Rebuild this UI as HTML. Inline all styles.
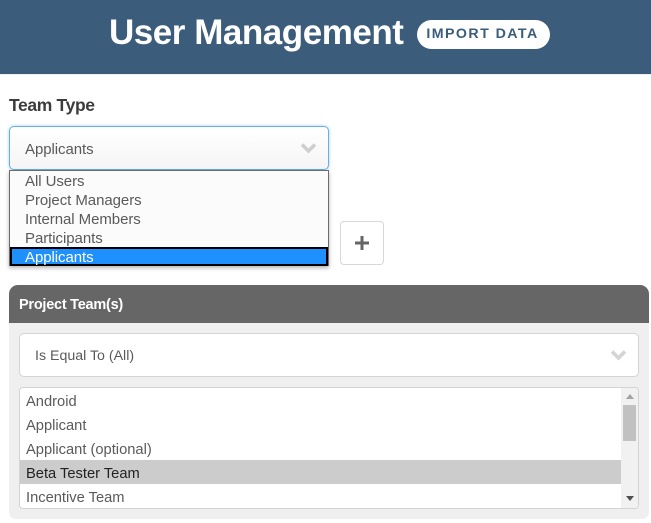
<!DOCTYPE html>
<html>
<head>
<meta charset="utf-8">
<style>
html,body{margin:0;padding:0;background:#fff}
body{width:651px;height:523px;position:relative;overflow:hidden;font-family:"Liberation Sans",sans-serif;color:#555}
div{position:absolute;box-sizing:border-box;white-space:nowrap}
svg{position:absolute;display:block}
.t{font-size:15px;letter-spacing:-0.06px;line-height:19px;left:25px;color:#5a5a5a}
.r{left:0;width:601px;height:24px;line-height:26px;padding-left:6px;font-size:14.7px;color:#5a5a5a}
</style>
</head>
<body>
<div style="left:0;top:0;width:651px;height:74px;background:#3b5d7b"></div>
<div style="left:0;top:74px;width:651px;height:1px;background:#eee"></div>
<div style="left:109px;top:12px;font-size:35px;line-height:42px;color:#fff;font-weight:700;letter-spacing:-0.47px">User Management</div>
<div style="left:417px;top:20px;width:133px;height:29px;padding-right:2px;background:#fff;border-radius:15px;color:#3b5d7b;font-weight:700;font-size:14.2px;line-height:29px;text-align:center;letter-spacing:1.45px">IMPORT DATA</div>

<div style="left:9px;top:95px;font-size:17.5px;line-height:21px;font-weight:700;color:#3c3c3c;letter-spacing:-0.35px">Team Type</div>

<div style="left:9px;top:126px;width:320px;height:44px;border:1px solid #66afe9;border-radius:5px;background:linear-gradient(#fff,#f5f5f5);box-shadow:0 0 3px rgba(102,175,233,.6)"></div>
<div class="t" style="top:140px">Applicants</div>
<svg style="left:300px;top:142px" width="17" height="13" viewBox="0 0 17 13"><path d="M2 2.5 L8.5 9 L15 2.5" fill="none" stroke="#cfcfcf" stroke-width="3.6"/></svg>

<div style="left:340px;top:221px;width:44px;height:44px;border:1px solid #d8d8d8;border-radius:4px;background:#fff"></div>
<svg style="left:355px;top:236px" width="14" height="14" viewBox="0 0 14 14"><path d="M0 5.5H14V8.5H0ZM5.5 0H8.5V14H5.5Z" fill="#666"/></svg>

<div style="left:9px;top:170px;width:320px;height:96px;background:#fbfbfb;border:1px solid #6b6b6b;box-shadow:0 2px 4px rgba(0,0,0,.3)"></div>
<div class="t" style="top:172px">All Users</div>
<div class="t" style="top:191px">Project Managers</div>
<div class="t" style="top:210px">Internal Members</div>
<div class="t" style="top:229px">Participants</div>
<div style="left:10px;top:247px;width:318px;height:19px;background:#1e90ff;border:2px solid #000"></div>
<div class="t" style="top:248px;color:#fff">Applicants</div>

<div style="left:9px;top:285px;width:640px;height:234px;background:#efefef;border-radius:9px 9px 7px 7px"></div>
<div style="left:9px;top:285px;width:640px;height:38px;background:#666;border-radius:9px 9px 0 0"></div>
<div style="left:19px;top:296px;font-size:14.5px;line-height:19px;font-weight:700;color:#fff;letter-spacing:-0.25px">Project Team(s)</div>

<div style="left:19px;top:333px;width:620px;height:44px;background:#fff;border:1px solid #d4d4d4;border-radius:5px"></div>
<div style="left:35px;top:347px;font-size:14.2px;line-height:19px;color:#5a5a5a">Is Equal To (All)</div>
<svg style="left:610px;top:349px" width="17" height="13" viewBox="0 0 17 13"><path d="M2 2.5 L8.5 9 L15 2.5" fill="none" stroke="#d4d4d4" stroke-width="3.6"/></svg>

<div style="left:19px;top:387px;width:620px;height:122px;background:#fff;border:1px solid #d4d4d4;border-radius:4px;overflow:hidden">
  <div class="r" style="top:1px">Android</div>
  <div class="r" style="top:25px">Applicant</div>
  <div class="r" style="top:49px">Applicant (optional)</div>
  <div class="r" style="top:72px;background:#ccc;color:#222;line-height:28px">Beta Tester Team</div>
  <div class="r" style="top:97px">Incentive Team</div>
  <div style="left:601px;top:0;width:18px;height:120px;background:#f1f1f1"></div>
  <div style="left:603px;top:17px;width:13px;height:36px;background:#c1c1c1"></div>
</div>
<svg style="left:626px;top:394px" width="8" height="5" viewBox="0 0 8 5"><path d="M4 0L8 5H0Z" fill="#a3a3a3"/></svg>
<svg style="left:626px;top:496px" width="8" height="5" viewBox="0 0 8 5"><path d="M0 0H8L4 5Z" fill="#505050"/></svg>
</body>
</html>
